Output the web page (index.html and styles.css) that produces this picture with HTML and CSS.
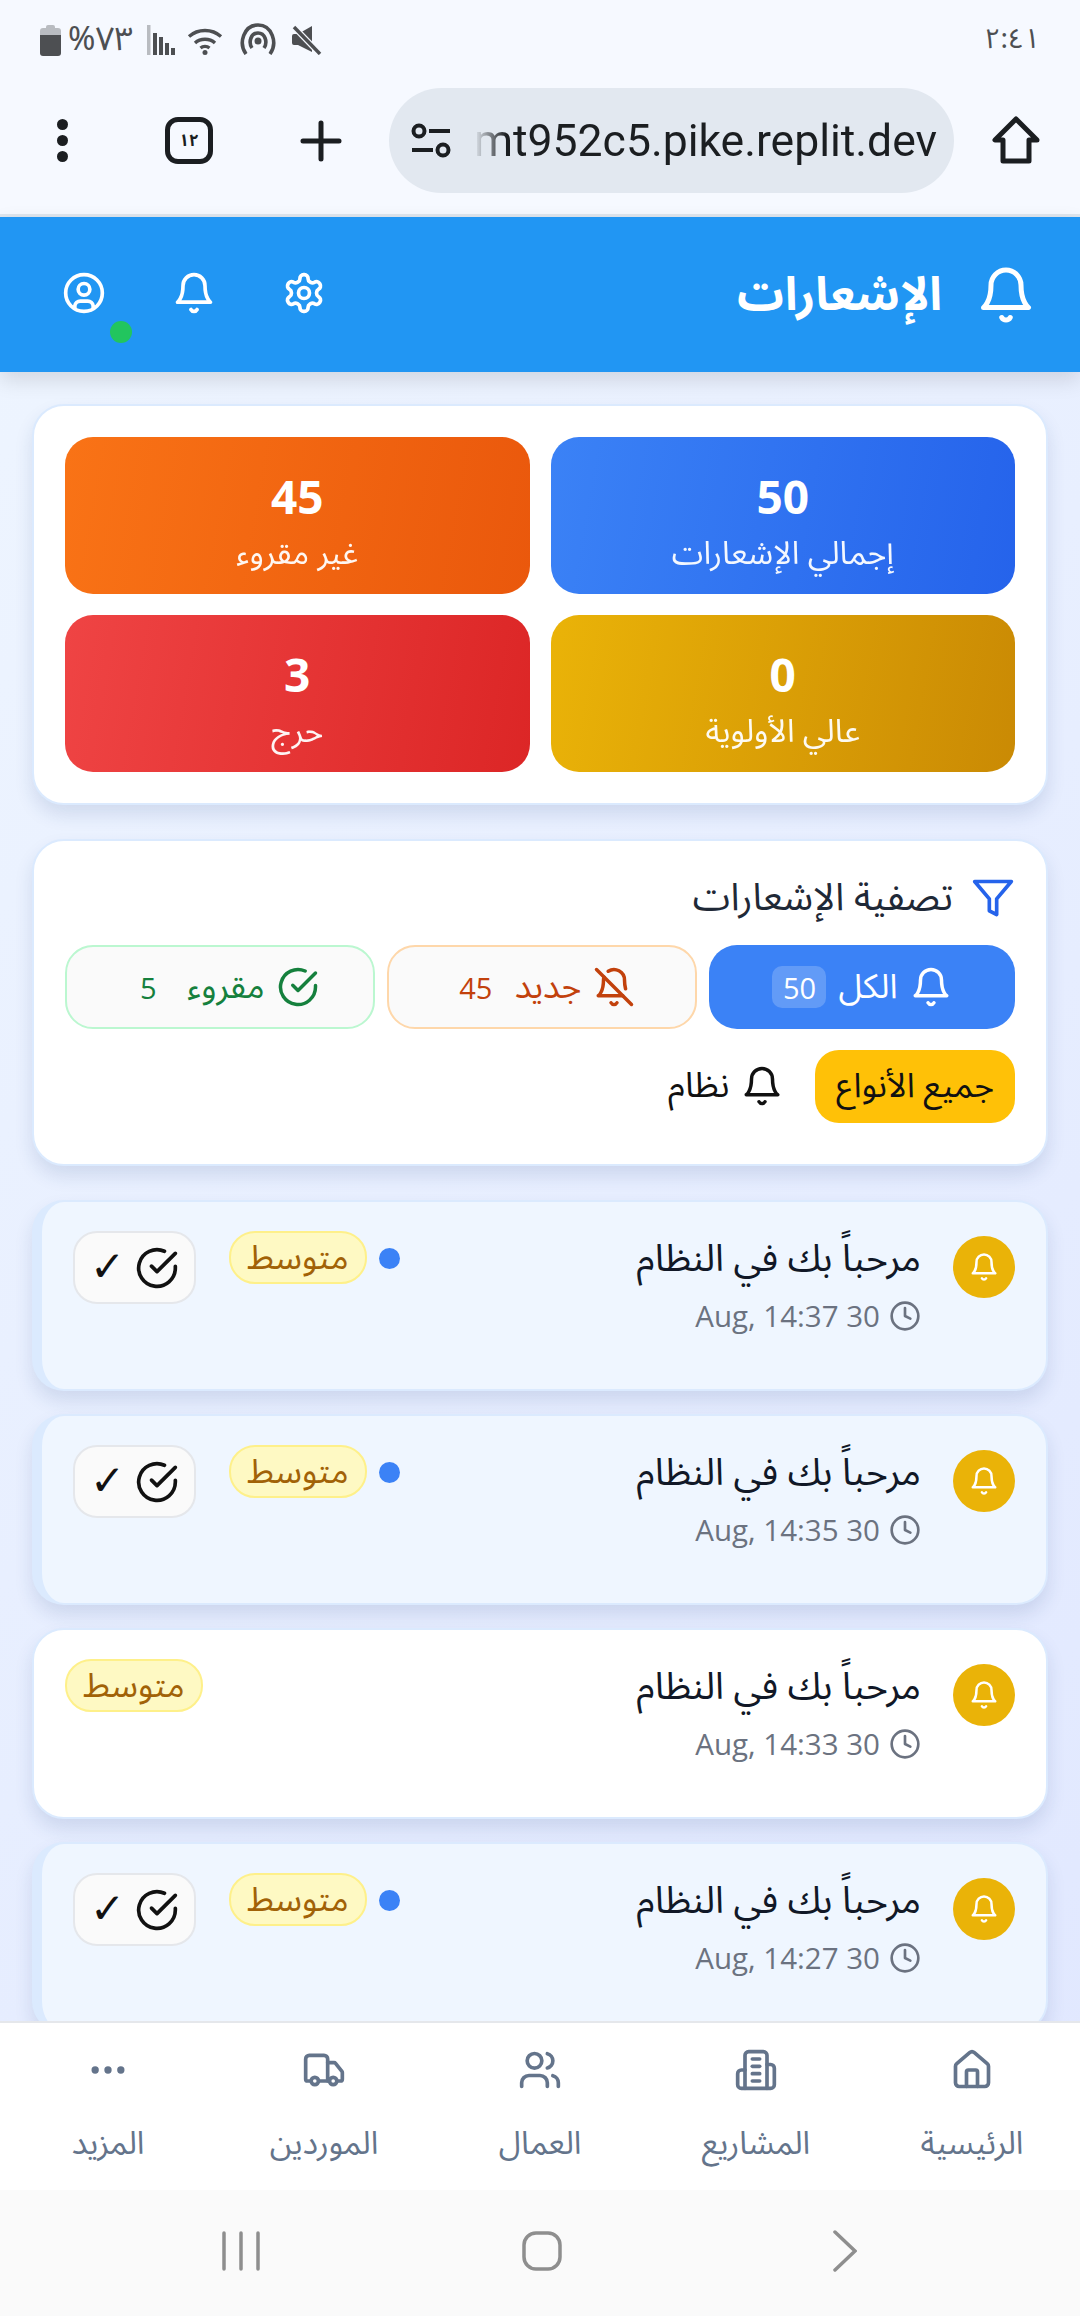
FILE: index.html
```html
<!DOCTYPE html>
<html lang="ar" dir="rtl">
<head>
    <meta charset="UTF-8">
    <meta name="viewport" content="width=device-width, initial-scale=1.0">
    <title>الإشعارات</title>
    <link rel="stylesheet" href="styles.css">
</head>
<body>
    <svg class="sprite" aria-hidden="true">
        <symbol id="i_bell" viewBox="0 0 24 24"><path d="M6 8a6 6 0 0 1 12 0c0 7 3 9 3 9H3s3-2 3-9"/><path d="M10.3 21a1.94 1.94 0 0 0 3.4 0"/></symbol>
        <symbol id="i_bell_off" viewBox="0 0 24 24"><path d="M8.7 3A6 6 0 0 1 18 8a21.3 21.3 0 0 0 .6 5"/><path d="M17 17H3s3-2 3-9a4.67 4.67 0 0 1 .3-1.7"/><path d="M10.3 21a1.94 1.94 0 0 0 3.4 0"/><path d="m2 2 20 20"/></symbol>
        <symbol id="i_check" viewBox="0 0 24 24"><path d="M22 11.08V12a10 10 0 1 1-5.93-9.14"/><path d="m9 11 3 3L22 4"/></symbol>
        <symbol id="i_clock" viewBox="0 0 24 24"><circle cx="12" cy="12" r="10"/><path d="M12 6v6l4 2"/></symbol>
        <symbol id="i_filter" viewBox="0 0 24 24"><path d="M22 3H2l8 9.46V19l4 2v-8.54z"/></symbol>
        <symbol id="i_gear" viewBox="0 0 24 24"><path d="M12.22 2h-.44a2 2 0 0 0-2 2v.18a2 2 0 0 1-1 1.73l-.43.25a2 2 0 0 1-2 0l-.15-.08a2 2 0 0 0-2.73.73l-.22.38a2 2 0 0 0 .73 2.73l.15.1a2 2 0 0 1 1 1.72v.51a2 2 0 0 1-1 1.74l-.15.09a2 2 0 0 0-.73 2.73l.22.38a2 2 0 0 0 2.73.73l.15-.08a2 2 0 0 1 2 0l.43.25a2 2 0 0 1 1 1.73V20a2 2 0 0 0 2 2h.44a2 2 0 0 0 2-2v-.18a2 2 0 0 1 1-1.73l.43-.25a2 2 0 0 1 2 0l.15.08a2 2 0 0 0 2.73-.73l.22-.39a2 2 0 0 0-.73-2.73l-.15-.08a2 2 0 0 1-1-1.74v-.5a2 2 0 0 1 1-1.74l.15-.09a2 2 0 0 0 .73-2.73l-.22-.38a2 2 0 0 0-2.73-.73l-.15.08a2 2 0 0 1-2 0l-.43-.25a2 2 0 0 1-1-1.73V4a2 2 0 0 0-2-2z"/><circle cx="12" cy="12" r="3"/></symbol>
        <symbol id="i_user" viewBox="0 0 24 24"><circle cx="12" cy="12" r="10"/><circle cx="12" cy="10" r="3.2"/><path d="M7 20v-1a3 3 0 0 1 3-2.6h4a3 3 0 0 1 3 2.6v1"/></symbol>
        <symbol id="i_home" viewBox="0 0 24 24"><path d="M15 21v-8a1 1 0 0 0-1-1h-4a1 1 0 0 0-1 1v8"/><path d="M3 10a2 2 0 0 1 .7-1.5l7-6a2 2 0 0 1 2.6 0l7 6a2 2 0 0 1 .7 1.5v9a2 2 0 0 1-2 2H5a2 2 0 0 1-2-2z"/></symbol>
        <symbol id="i_building" viewBox="0 0 24 24"><path d="M6 22V4a2 2 0 0 1 2-2h8a2 2 0 0 1 2 2v18z"/><path d="M6 12H4a2 2 0 0 0-2 2v6a2 2 0 0 0 2 2h2"/><path d="M18 9h2a2 2 0 0 1 2 2v9a2 2 0 0 1-2 2h-2"/><path d="M10 6h4"/><path d="M10 10h4"/><path d="M10 14h4"/><path d="M10 18h4"/></symbol>
        <symbol id="i_users" viewBox="0 0 24 24"><path d="M16 21v-2a4 4 0 0 0-4-4H6a4 4 0 0 0-4 4v2"/><circle cx="9" cy="7" r="4"/><path d="M22 21v-2a4 4 0 0 0-3-3.87"/><path d="M16 3.13a4 4 0 0 1 0 7.75"/></symbol>
        <symbol id="i_truck" viewBox="0 0 24 24"><path d="M14 18V6a2 2 0 0 0-2-2H4a2 2 0 0 0-2 2v11a1 1 0 0 0 1 1h2"/><path d="M15 18H9"/><path d="M19 18h2a1 1 0 0 0 1-1v-3.65a1 1 0 0 0-.22-.62l-3.48-4.35A1 1 0 0 0 17.52 8H14"/><circle cx="17" cy="18" r="2"/><circle cx="7" cy="18" r="2"/></symbol>
        <symbol id="i_more" viewBox="0 0 24 24"><circle cx="12" cy="12" r="1"/><circle cx="19" cy="12" r="1"/><circle cx="5" cy="12" r="1"/></symbol>
    </svg>

    <div class="status_bar" dir="ltr">
        <div class="status_left">
            <svg class="st_battery" viewBox="0 0 21 32"><path d="M6 3a2 2 0 0 1 2-2h5a2 2 0 0 1 2 2v1h3a3 3 0 0 1 3 3v4H0V7a3 3 0 0 1 3-3h3z" fill="#b9bcc1"/><path d="M0 11h21v18a3 3 0 0 1-3 3H3a3 3 0 0 1-3-3z" fill="#4d4f52"/></svg>
            <span class="st_text" dir="rtl">٧٣%</span>
            <svg class="st_signal" viewBox="0 0 29 30"><rect x="0" y="0" width="3.5" height="30" fill="#b9bcc1"/><rect x="6" y="8" width="4" height="22" fill="#4d4f52"/><rect x="12" y="12" width="4" height="18" fill="#4d4f52"/><rect x="18" y="18" width="4" height="12" fill="#4d4f52"/><rect x="24" y="23" width="4" height="7" fill="#4d4f52"/></svg>
            <svg class="st_wifi" viewBox="0 0 36 28" fill="none" stroke="#4d4f52" stroke-width="3.4"><path d="M2 9.5c9-8 23-8 32 0"/><path d="M8 16c5.500-5 14.500-5 20 0"/><path d="M13.500 21c2.500-2 6.500-2 9 0"/><circle cx="18" cy="25.500" r="2.500" fill="#4d4f52" stroke="none"/></svg>
            <svg class="st_hotspot" viewBox="0 0 38 32" fill="none" stroke="#4d4f52" stroke-width="3.6"><path d="M7 31C-1 20 5 2 19 2s20 18 12 29"/><path d="M13 25c-4-6-1-15 6-15s10 9 6 15"/><circle cx="19" cy="18" r="3.500" fill="#4d4f52" stroke="none"/></svg>
            <svg class="st_mute" viewBox="0 0 30 30"><path d="M0 11a2 2 0 0 1 2-2h4l14-8v26l-14-7H2a2 2 0 0 1-2-2z" fill="#4d4f52"/><path d="M2 2l26 27" stroke="#f6f9ff" stroke-width="6"/><path d="M2 2l26 27" stroke="#4d4f52" stroke-width="3.4"/></svg>
        </div>
        <span class="st_time">٢:٤١</span>
    </div>

    <div class="browser_bar" dir="ltr">
        <div class="menu_dots"><i></i><i></i><i></i></div>
        <div class="tab_count">١٢</div>
        <svg class="br_plus" viewBox="0 0 42 42" fill="none" stroke="#1b1e21" stroke-width="5" stroke-linecap="round"><path d="M21 3v36M3 21h36"/></svg>
        <div class="url_bar">
            <svg class="url_tune" viewBox="0 0 40 36" fill="none" stroke="#1b1e21" stroke-width="4"><circle cx="8" cy="8" r="5.500"/><path d="M18 8h21"/><path d="M1 27h21"/><circle cx="32" cy="27" r="5.500"/></svg>
            <div class="url_text">mt952c5.pike.replit.dev</div>
        </div>
        <svg class="br_home" viewBox="0 0 48 48" fill="none" stroke="#1b1e21" stroke-width="5" stroke-linejoin="round"><path d="M24 3L3 24h8v21h26V24h8z"/></svg>
    </div>

    <header class="app_header">
        <div class="header_title">
            <svg class="ic ic_title"><use href="#i_bell"/></svg>
            <h1>الإشعارات</h1>
        </div>
        <div class="header_actions">
            <svg class="ic ic_head"><use href="#i_gear"/></svg>
            <svg class="ic ic_head"><use href="#i_bell"/></svg>
            <div class="user_wrap">
                <svg class="ic ic_head"><use href="#i_user"/></svg>
                <span class="online_dot"></span>
            </div>
        </div>
    </header>

    <main class="content">
        <section class="card stats_card">
            <div class="stat stat_blue"><b>50</b><span>إجمالي الإشعارات</span></div>
            <div class="stat stat_orange"><b>45</b><span>غير مقروء</span></div>
            <div class="stat stat_gold"><b>0</b><span>عالي الأولوية</span></div>
            <div class="stat stat_red"><b>3</b><span>حرج</span></div>
        </section>

        <section class="card filter_card">
            <div class="filter_title">
                <svg class="ic ic_filter"><use href="#i_filter"/></svg>
                <h2>تصفية الإشعارات</h2>
            </div>
            <div class="filter_pills">
                <div class="pill pill_all">
                    <svg class="ic ic_pill"><use href="#i_bell"/></svg>
                    <span>الكل</span>
                    <span class="pill_count">50</span>
                </div>
                <div class="pill pill_new">
                    <svg class="ic ic_pill"><use href="#i_bell_off"/></svg>
                    <span>جديد</span>
                    <span class="pill_count">45</span>
                </div>
                <div class="pill pill_read">
                    <svg class="ic ic_pill"><use href="#i_check"/></svg>
                    <span>مقروء</span>
                    <span class="pill_count">5</span>
                </div>
            </div>
            <div class="filter_types">
                <div class="type_active">جميع الأنواع</div>
                <div class="type_item">
                    <svg class="ic ic_pill"><use href="#i_bell"/></svg>
                    <span>نظام</span>
                </div>
            </div>
        </section>

        <div class="notif_list">
            <article class="card notif unread">
                <div class="notif_bell"><svg class="ic"><use href="#i_bell"/></svg></div>
                <div class="notif_body">
                    <h3>مرحباً بك في النظام</h3>
                    <div class="notif_time"><svg class="ic"><use href="#i_clock"/></svg><span>30 Aug, 14:37</span></div>
                </div>
                <span class="notif_dot"></span>
                <span class="badge">متوسط</span>
                <div class="mark_btn"><svg class="ic"><use href="#i_check"/></svg><span>✓</span></div>
            </article>
            <article class="card notif unread">
                <div class="notif_bell"><svg class="ic"><use href="#i_bell"/></svg></div>
                <div class="notif_body">
                    <h3>مرحباً بك في النظام</h3>
                    <div class="notif_time"><svg class="ic"><use href="#i_clock"/></svg><span>30 Aug, 14:35</span></div>
                </div>
                <span class="notif_dot"></span>
                <span class="badge">متوسط</span>
                <div class="mark_btn"><svg class="ic"><use href="#i_check"/></svg><span>✓</span></div>
            </article>
            <article class="card notif">
                <div class="notif_bell"><svg class="ic"><use href="#i_bell"/></svg></div>
                <div class="notif_body">
                    <h3>مرحباً بك في النظام</h3>
                    <div class="notif_time"><svg class="ic"><use href="#i_clock"/></svg><span>30 Aug, 14:33</span></div>
                </div>
                <span class="badge">متوسط</span>
            </article>
            <article class="card notif unread">
                <div class="notif_bell"><svg class="ic"><use href="#i_bell"/></svg></div>
                <div class="notif_body">
                    <h3>مرحباً بك في النظام</h3>
                    <div class="notif_time"><svg class="ic"><use href="#i_clock"/></svg><span>30 Aug, 14:27</span></div>
                </div>
                <span class="notif_dot"></span>
                <span class="badge">متوسط</span>
                <div class="mark_btn"><svg class="ic"><use href="#i_check"/></svg><span>✓</span></div>
            </article>
        </div>
    </main>

    <nav class="bottom_nav">
        <div class="nav_item"><svg class="ic"><use href="#i_home"/></svg><span>الرئيسية</span></div>
        <div class="nav_item"><svg class="ic"><use href="#i_building"/></svg><span>المشاريع</span></div>
        <div class="nav_item"><svg class="ic"><use href="#i_users"/></svg><span>العمال</span></div>
        <div class="nav_item"><svg class="ic"><use href="#i_truck"/></svg><span>الموردين</span></div>
        <div class="nav_item"><svg class="ic"><use href="#i_more"/></svg><span>المزيد</span></div>
    </nav>

    <div class="system_nav" dir="ltr">
        <svg class="sys_recent" viewBox="0 0 38 40" stroke="#8e8e8e" stroke-width="3.5" stroke-linecap="round"><path d="M2 2v36M19 2v36M36 2v36"/></svg>
        <svg class="sys_home" viewBox="0 0 40 40" fill="none" stroke="#8e8e8e" stroke-width="3.5"><rect x="2" y="2" width="36" height="36" rx="12"/></svg>
        <svg class="sys_back" viewBox="0 0 24 42" fill="none" stroke="#8e8e8e" stroke-width="3.5" stroke-linecap="round"><path d="M2 2l20 19L2 40"/></svg>
    </div>
</body>
</html>
```

FILE: styles.css
```css
* {
    box-sizing: border-box;
}
html, body {
    margin: 0;
    padding: 0;
}
body {
    width: 1080px;
    height: 2316px;
    display: flex;
    flex-direction: column;
    overflow: hidden;
    background: linear-gradient(135deg, #eff6ff, #e0e7ff);
    font-family: "Noto Sans Arabic", "Noto Sans", "DejaVu Sans", sans-serif;
    color: #111827;
}
h1, h2, h3 {
    margin: 0;
    font-weight: 400;
}
.sprite {
    display: none;
}
.ic {
    display: block;
    fill: none;
    stroke: currentColor;
    stroke-width: 2;
    stroke-linecap: round;
    stroke-linejoin: round;
    flex-shrink: 0;
}

/* phone status bar */
.status_bar {
    height: 74px;
    padding: 22px 40px 0 40px;
    display: flex;
    justify-content: space-between;
    background: #f6f9ff;
    color: #4d4f52;
}
.status_left {
    display: flex;
    align-items: flex-start;
}
.st_battery {
    width: 21px;
    height: 32px;
    margin-top: 2px;
}
.st_text {
    margin: -2px 14px 0 7px;
    font-size: 33px;
    line-height: 40px;
}
.st_signal {
    width: 29px;
    height: 30px;
    margin: 3px 11px 0 0;
}
.st_wifi {
    width: 36px;
    height: 28px;
    margin: 5px 16px 0 0;
}
.st_hotspot {
    width: 38px;
    height: 32px;
    margin: 1px 15px 0 0;
}
.st_mute {
    width: 30px;
    height: 30px;
    margin-top: 3px;
}
.st_time {
    font-size: 28px;
    line-height: 36px;
}

/* browser toolbar */
.browser_bar {
    height: 143px;
    padding: 14px 38px 0 57px;
    display: flex;
    align-items: flex-start;
    background: #f6f9ff;
    border-bottom: 3px solid #dfe6ee;
    color: #1b1e21;
}
.menu_dots {
    width: 15px;
    margin-top: 31px;
    display: flex;
    flex-direction: column;
    gap: 5px;
}
.menu_dots i {
    width: 11px;
    height: 11px;
    border-radius: 50%;
    background: #1b1e21;
}
.tab_count {
    width: 48px;
    height: 47px;
    margin: 29px 0 0 93px;
    border: 5px solid #1b1e21;
    border-radius: 13px;
    display: flex;
    align-items: center;
    justify-content: center;
    font-size: 17px;
    font-weight: 700;
}
.br_plus {
    width: 42px;
    height: 42px;
    margin: 32px 0 0 87px;
}
.url_bar {
    width: 565px;
    height: 105px;
    margin-left: 47px;
    padding: 0 21px 0 22px;
    border-radius: 53px;
    background: #e2e8f0;
    display: flex;
    align-items: center;
    gap: 23px;
    overflow: hidden;
}
.url_tune {
    width: 40px;
    height: 36px;
    flex-shrink: 0;
}
.url_text {
    font-family: Roboto, sans-serif;
    font-size: 44.5px;
    white-space: nowrap;
    background: linear-gradient(90deg, #e2e8f0, #1b1e21 7%);
    -webkit-background-clip: text;
    background-clip: text;
    color: transparent;
}
.br_home {
    width: 48px;
    height: 48px;
    margin: 28px 0 0 38px;
}

/* app header */
.app_header {
    height: 155px;
    padding: 0 44px 0 62px;
    display: flex;
    justify-content: space-between;
    align-items: center;
    background: #2196f3;
    color: #fff;
    box-shadow: 0 8px 20px rgba(0, 0, 0, .12);
    position: relative;
    z-index: 1;
}
.header_title {
    display: flex;
    align-items: center;
    gap: 34px;
}
.header_title h1 {
    font-size: 46.5px;
    font-weight: 700;
}
.ic_title {
    width: 60px;
    height: 60px;
}
.header_actions {
    display: flex;
    align-items: center;
    gap: 66px;
    margin-bottom: 4px;
}
.ic_head {
    width: 44px;
    height: 44px;
}
.user_wrap {
    position: relative;
}
.online_dot {
    position: absolute;
    right: -26px;
    top: 50px;
    width: 22px;
    height: 22px;
    border-radius: 50%;
    background: #22c55e;
}

/* main column */
.content {
    flex: 1;
    min-height: 0;
    overflow: hidden;
    padding: 32px 32px 0;
    display: flex;
    flex-direction: column;
    gap: 34px;
}
.card {
    flex-shrink: 0;
    background: #fff;
    border: 2px solid #dbeafe;
    border-radius: 32px;
    box-shadow: 0 10px 18px rgba(30, 64, 120, .13);
}

/* stat tiles */
.stats_card {
    padding: 31px;
    display: grid;
    grid-template-columns: 1fr 1fr;
    gap: 21px;
}
.stat {
    height: 157px;
    padding-top: 16px;
    border-radius: 28px;
    color: #fff;
    display: flex;
    flex-direction: column;
    align-items: center;
    justify-content: center;
}
.stat b {
    font-family: "Open Sans", sans-serif;
    font-size: 46px;
    line-height: 60px;
}
.stat span {
    font-size: 32px;
    line-height: 56px;
    opacity: .95;
}
.stat_blue {
    background: linear-gradient(100deg, #3b82f6, #2563eb);
}
.stat_orange {
    background: linear-gradient(100deg, #f97316, #ea580c);
}
.stat_gold {
    background: linear-gradient(100deg, #eab308, #ca8a04);
}
.stat_red {
    background: linear-gradient(100deg, #ef4444, #dc2626);
}

/* filters */
.filter_card {
    height: 327px;
    padding: 27px 31px 0;
}
.filter_title {
    height: 60px;
    margin-bottom: 17px;
    display: flex;
    align-items: center;
    gap: 18px;
}
.filter_title h2 {
    font-size: 38px;
    color: #1f2937;
}
.ic_filter {
    width: 44px;
    height: 44px;
    color: #2563eb;
}
.filter_pills {
    display: grid;
    grid-template-columns: 306fr 310fr 310fr;
    gap: 12px;
}
.pill {
    height: 84px;
    border: 2px solid transparent;
    border-radius: 28px;
    display: flex;
    align-items: center;
    justify-content: center;
    gap: 12px;
    font-size: 34px;
    background: #fafafa;
}
.ic_pill {
    width: 42px;
    height: 42px;
}
.pill_all {
    background: #3b82f6;
    color: #fff;
}
.pill_new {
    border-color: #fed7aa;
    color: #c2410c;
}
.pill_read {
    border-color: #bbf7d0;
    color: #15803d;
}
.pill_count {
    min-width: 54px;
    height: 42px;
    padding: 0 8px;
    border-radius: 10px;
    display: flex;
    align-items: center;
    justify-content: center;
    font-family: "Open Sans", sans-serif;
    font-size: 29px;
}
.pill_all .pill_count {
    background: rgba(255, 255, 255, .2);
}
.filter_types {
    margin-top: 20px;
    display: flex;
    align-items: center;
    gap: 32px;
}
.type_active {
    height: 73px;
    padding: 0 21px;
    border-radius: 24px;
    background: #ffc107;
    display: flex;
    align-items: center;
    font-size: 34px;
    color: #111;
}
.type_item {
    display: flex;
    align-items: center;
    gap: 12px;
    font-size: 35px;
    color: #111;
}

/* notification cards */
.notif_list {
    display: flex;
    flex-direction: column;
    gap: 23px;
}
.notif {
    min-height: 191px;
    padding: 29px 31px;
    display: flex;
    align-items: flex-start;
}
.notif.unread {
    background: #eff6ff;
    border-left: 10px solid #dbeafe;
}
.notif_bell {
    width: 62px;
    height: 62px;
    margin-top: 5px;
    border-radius: 50%;
    background: #eab308;
    color: #fff;
    display: flex;
    align-items: center;
    justify-content: center;
    flex-shrink: 0;
}
.notif_bell .ic {
    width: 30px;
    height: 30px;
}
.notif_body {
    flex: 1;
    margin-right: 32px;
}
.notif_body h3 {
    font-size: 37.5px;
    line-height: 56px;
    color: #111827;
}
.notif_time {
    margin-top: 8px;
    display: flex;
    align-items: center;
    gap: 9px;
    font-family: "Open Sans", sans-serif;
    font-size: 29.500px;
    color: #6b7280;
}
.notif_time .ic {
    width: 32px;
    height: 32px;
}
.notif_dot {
    width: 21px;
    height: 21px;
    margin: 17px 0 0 12px;
    border-radius: 50%;
    background: #3b82f6;
}
.badge {
    height: 53px;
    padding: 0 16px;
    border: 2px solid #fef08a;
    border-radius: 26px;
    background: #fef9c3;
    color: #a16207;
    font-size: 34px;
    display: flex;
    align-items: center;
}
.mark_btn {
    width: 123px;
    height: 73px;
    margin-right: 33px;
    border: 2px solid #e5e7eb;
    border-radius: 24px;
    background: #fafafa;
    display: flex;
    align-items: center;
    justify-content: center;
    gap: 10px;
    color: #111;
    font-size: 42px;
}
.mark_btn .ic {
    width: 44px;
    height: 44px;
}

/* bottom tabs */
.bottom_nav {
    height: 169px;
    flex-shrink: 0;
    display: grid;
    grid-template-columns: repeat(5, 216px);
    background: #fff;
    border-top: 2px solid #e5e7eb;
    position: relative;
    z-index: 1;
}
.nav_item {
    padding-top: 25px;
    display: flex;
    flex-direction: column;
    align-items: center;
    color: #64748b;
    font-size: 32px;
}
.nav_item .ic {
    width: 44px;
    height: 44px;
    margin-bottom: 18px;
}

/* android nav bar */
.system_nav {
    height: 126px;
    flex-shrink: 0;
    display: flex;
    align-items: center;
    background: #fafafa;
    padding: 0 0 4px 222px;
}
.sys_recent {
    width: 38px;
    height: 40px;
}
.sys_home {
    width: 40px;
    height: 40px;
    margin-left: 262px;
}
.sys_back {
    width: 24px;
    height: 42px;
    margin-left: 271px;
}
```
